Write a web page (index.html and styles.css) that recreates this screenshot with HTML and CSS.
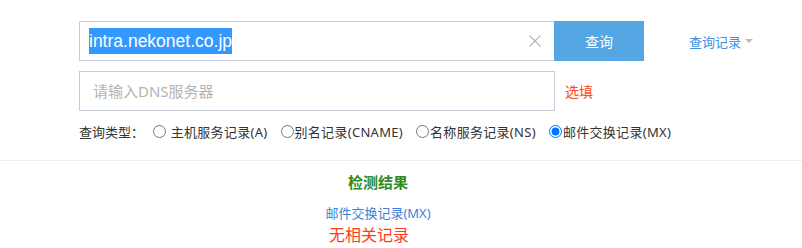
FILE: index.html
```html
<!DOCTYPE html>
<html lang="zh-CN">
<head>
    <meta charset="UTF-8">
    <meta name="viewport" content="width=device-width, initial-scale=1.0">
    <title>DNS查询</title>
    <link rel="stylesheet" href="styles.css">
</head>
<body>
    <div class="search">
        <div class="row">
            <div class="domain">
                <span class="sel">intra.nekonet.co.jp</span>
                <svg class="clear" width="12" height="12" viewBox="0 0 12 12">
                    <path d="M0.5 0.5 L11.5 11.5 M11.5 0.5 L0.5 11.5" stroke="#b5b5b5" stroke-width="1.2" fill="none"/>
                </svg>
            </div>
            <button class="btn">查询</button>
            <a class="history">查询记录<i class="caret"></i></a>
        </div>
        <div class="row row2">
            <div class="dns">请输入DNS服务器</div>
            <span class="optional">选填</span>
        </div>
        <div class="types">
            <span class="label">查询类型：</span>
            <label class="first"><input type="radio" name="t"> 主机服务记录(A)</label>
            <label><input type="radio" name="t">别名记录(CNAME)</label>
            <label><input type="radio" name="t">名称服务记录(NS)</label>
            <label><input type="radio" name="t" checked>邮件交换记录(MX)</label>
        </div>
    </div>

    <div class="result">
        <h3>检测结果</h3>
        <p class="kind">邮件交换记录(MX)</p>
        <p class="none">无相关记录</p>
    </div>
</body>
</html>
```

FILE: styles.css
```css
*{
    padding: 0;
    margin: 0;
}

body {
    font-family: "Noto Sans", "Noto Sans CJK SC", sans-serif;
    font-size: 13px;
    color: #333;
    background: #fff;
}

.search {
    padding: 21px 0 0 79px;
    height: 139px;
    border-bottom: 1px solid #eeeeee;
}

.row {
    display: flex;
    align-items: center;
}

.row2 {
    margin-top: 10px;
}

.domain {
    width: 475px;
    height: 40px;
    box-sizing: border-box;
    border: 1px solid #c6ccd8;
    border-right: none;
    display: flex;
    align-items: center;
    padding-left: 9px;
    position: relative;
}

.sel {
    background: #3399ff;
    color: #fff;
    font-family: "Liberation Sans", sans-serif;
    font-size: 17.5px;
    line-height: 26px;
}

.clear {
    position: absolute;
    right: 13px;
    top: 13px;
}

.btn {
    width: 90px;
    height: 40px;
    border: none;
    background: #55a6e2;
    color: #fff;
    font-family: inherit;
    font-size: 14px;
}

.history {
    margin-left: 45px;
    color: #3d8fe0;
    display: flex;
    align-items: center;
}

.caret {
    margin-left: 4px;
    width: 0;
    height: 0;
    border-left: 4px solid transparent;
    border-right: 4px solid transparent;
    border-top: 4px solid #bbbbbb;
}

.dns {
    width: 476px;
    height: 40px;
    box-sizing: border-box;
    border: 1px solid #c6ccd8;
    padding-left: 13px;
    line-height: 38px;
    font-size: 15px;
    color: #b4b4b4;
}

.optional {
    margin-left: 10px;
    color: #ff4a12;
    font-size: 14px;
}

.types {
    margin-top: 10px;
    display: flex;
    align-items: center;
    height: 20px;
}

.types label {
    display: flex;
    align-items: center;
    margin-right: 13px;
    white-space: pre;
    letter-spacing: 0.3px;
}

.types input {
    margin: 0 1px 0 0;
    width: 13px;
    height: 13px;
}

.types .first input {
    margin-left: 9px;
}

.result {
    display: flex;
    flex-direction: column;
    align-items: center;
    padding-top: 10px;
    margin-right: 46px;
}

.result h3 {
    font-size: 15px;
    color: #2e8b1e;
    line-height: 22px;
}

.kind {
    margin-top: 12px;
    color: #3d7fd6;
    font-size: 13px;
    line-height: 16px;
}

.none {
    margin-top: 3px;
    margin-right: 18px;
    color: #ff3b1a;
    font-size: 16px;
    line-height: 22px;
}
```
